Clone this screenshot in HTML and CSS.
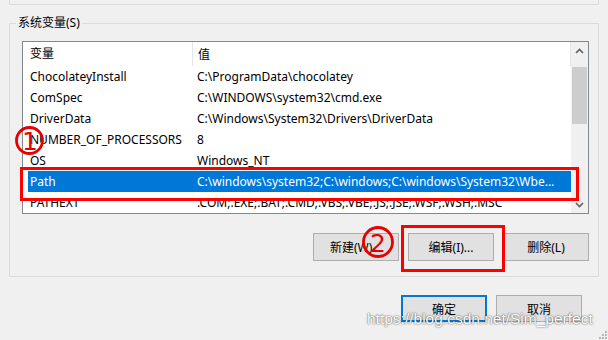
FILE: index.html
```html
<!DOCTYPE html>
<html lang="zh-CN">
  <head>
    <meta charset="UTF-8" />
    <title>环境变量</title>
    <link rel="stylesheet" href="styles.css">
  </head>
  <body>
    <div class="top-group"></div>

    <div class="group">
      <div class="group-title">系统变量(S)</div>

      <div class="listbox">
        <div class="list-table">
          <div class="list-head">
            <div class="col-name">变量</div>
            <div class="col-value">值</div>
          </div>
          <div class="list-row">
            <div class="col-name">ChocolateyInstall</div>
            <div class="col-value">C:\ProgramData\chocolatey</div>
          </div>
          <div class="list-row">
            <div class="col-name">ComSpec</div>
            <div class="col-value">C:\WINDOWS\system32\cmd.exe</div>
          </div>
          <div class="list-row">
            <div class="col-name">DriverData</div>
            <div class="col-value">C:\Windows\System32\Drivers\DriverData</div>
          </div>
          <div class="list-row">
            <div class="col-name">NUMBER_OF_PROCESSORS</div>
            <div class="col-value">8</div>
          </div>
          <div class="list-row">
            <div class="col-name">OS</div>
            <div class="col-value">Windows_NT</div>
          </div>
          <div class="list-row selected">
            <div class="col-name">Path</div>
            <div class="col-value">C:\windows\system32;C:\windows;C:\windows\System32\Wbe...</div>
          </div>
          <div class="list-row">
            <div class="col-name">PATHEXT</div>
            <div class="col-value">.COM;.EXE;.BAT;.CMD;.VBS;.VBE;.JS;.JSE;.WSF;.WSH;.MSC</div>
          </div>
        </div>
        <div class="scrollbar">
          <div class="scroll-btn">
            <svg width="9" height="6" viewBox="0 0 9 6"><path d="M1 5 L4.5 1.5 L8 5" fill="none" stroke="#606060" stroke-width="1.6"/></svg>
          </div>
          <div class="scroll-track">
            <div class="scroll-thumb"></div>
          </div>
          <div class="scroll-btn">
            <svg width="9" height="6" viewBox="0 0 9 6"><path d="M1 1 L4.5 4.5 L8 1" fill="none" stroke="#606060" stroke-width="1.6"/></svg>
          </div>
        </div>
      </div>

      <div class="button-row">
        <button class="btn">新建(W)...</button>
        <button class="btn">编辑(I)...</button>
        <button class="btn">删除(L)</button>
      </div>

      <!-- annotations -->
      <div class="mark mark-path"></div>
      <div class="mark mark-edit"></div>
      <svg class="badge badge-1" width="30" height="32" viewBox="0 0 30 32">
        <circle cx="14.5" cy="15.5" r="13" fill="none" stroke="#e60000" stroke-width="2.8"/>
        <text x="15" y="24.5" text-anchor="middle">1</text>
      </svg>
      <svg class="badge badge-2" width="36" height="34" viewBox="0 0 36 34">
        <circle cx="17" cy="16" r="14.5" fill="none" stroke="#e60000" stroke-width="2.8"/>
        <text x="17" y="25.5" text-anchor="middle">2</text>
      </svg>
    </div>

    <div class="dialog-buttons">
      <button class="btn btn-default">确定</button>
      <button class="btn">取消</button>
    </div>

    <div class="watermark">https://blog.csdn.net/Sim_perfect</div>
    <svg class="grip" width="8" height="8" viewBox="0 0 8 8">
      <rect x="6" y="0" width="2" height="2" fill="#b8b8b8"/>
      <rect x="3" y="3" width="2" height="2" fill="#b8b8b8"/>
      <rect x="6" y="3" width="2" height="2" fill="#b8b8b8"/>
      <rect x="0" y="6" width="2" height="2" fill="#b8b8b8"/>
      <rect x="3" y="6" width="2" height="2" fill="#b8b8b8"/>
      <rect x="6" y="6" width="2" height="2" fill="#b8b8b8"/>
    </svg>
  </body>
</html>
```

FILE: styles.css
```css
body {
  margin: 0;
  background-color: #f0f0f0;
  font-family: "Noto Sans", "Noto Sans CJK SC", sans-serif;
  font-size: 12px;
  color: #000;
  width: 608px;
  height: 340px;
  position: relative;
  overflow: hidden;
}

.top-group {
  margin: 0 9px;
  height: 4px;
  border: 1px solid #dcdcdc;
  border-top: none;
}

.group {
  position: relative;
  margin: 18px 9px 0 9px;
  border: 1px solid #dcdcdc;
  padding: 17px 9px 15px 12px;
}
.group-title {
  position: absolute;
  top: -10px;
  left: 6px;
  padding: 0 2px;
  line-height: 18px;
  background-color: #f0f0f0;
}

.listbox {
  display: flex;
  height: 173px;
  box-sizing: border-box;
  border: 1px solid #828790;
  background-color: #fff;
}
.list-table {
  flex: 1;
  min-width: 0;
}
.list-head {
  display: flex;
  height: 24px;
  align-items: center;
  padding-left: 5px;
  border-right: 1px solid #e5e5e5;
}
.list-head .col-name {
  border-right: 1px solid #e5e5e5;
  height: 24px;
  line-height: 24px;
}
.list-row {
  display: flex;
  height: 21px;
  line-height: 21px;
  margin-left: 5px;
  white-space: nowrap;
}
.col-name {
  width: 162px;
  flex: none;
  padding-left: 2px;
  overflow: hidden;
}
.col-value {
  flex: 1;
  min-width: 0;
  padding-left: 5px;
  overflow: hidden;
}
.list-row.selected {
  background-color: #0078d7;
  color: #fff;
}

.scrollbar {
  width: 17px;
  display: flex;
  flex-direction: column;
  background-color: #f0f0f0;
}
.scroll-btn {
  height: 17px;
  display: flex;
  align-items: center;
  justify-content: center;
}
.scroll-track {
  flex: 1;
  padding: 8px 1px 0;
}
.scroll-thumb {
  height: 57px;
  background-color: #cdcdcd;
}

.button-row {
  display: flex;
  gap: 9px;
  justify-content: flex-end;
  margin-top: 19px;
}
.btn {
  width: 86px;
  height: 28px;
  box-sizing: border-box;
  border: 1px solid #adadad;
  background-color: #e1e1e1;
  font-family: "Noto Sans", "Noto Sans CJK SC", sans-serif;
  font-size: 12px;
  color: #000;
  padding: 0;
}

.dialog-buttons {
  display: flex;
  gap: 9px;
  justify-content: flex-end;
  margin: 18px 26px 0 0;
}
.dialog-buttons .btn {
  height: 27px;
}
.btn-default {
  border: 2px solid #0078d7;
}

.mark {
  position: absolute;
  border: 3px solid #f00;
  box-sizing: border-box;
}
.mark-path {
  left: 10px;
  top: 143px;
  width: 559px;
  height: 34px;
}
.mark-edit {
  left: 391px;
  top: 201px;
  width: 104px;
  height: 47px;
}

.badge {
  position: absolute;
}
.badge text {
  font-family: "DejaVu Sans", sans-serif;
  font-size: 25px;
  fill: #e60000;
}
.badge-1 {
  left: 5px;
  top: 101px;
}
.badge-2 {
  left: 351px;
  top: 202px;
}

.watermark {
  position: absolute;
  left: 367px;
  top: 310px;
  font-family: "Liberation Sans", sans-serif;
  font-size: 15.5px;
  color: #fff;
  text-shadow: 0 0 2px rgba(0, 0, 0, 0.55), 0 0 1px rgba(0, 0, 0, 0.5);
  white-space: nowrap;
}
.grip {
  position: absolute;
  right: 1px;
  bottom: 1px;
}
```
